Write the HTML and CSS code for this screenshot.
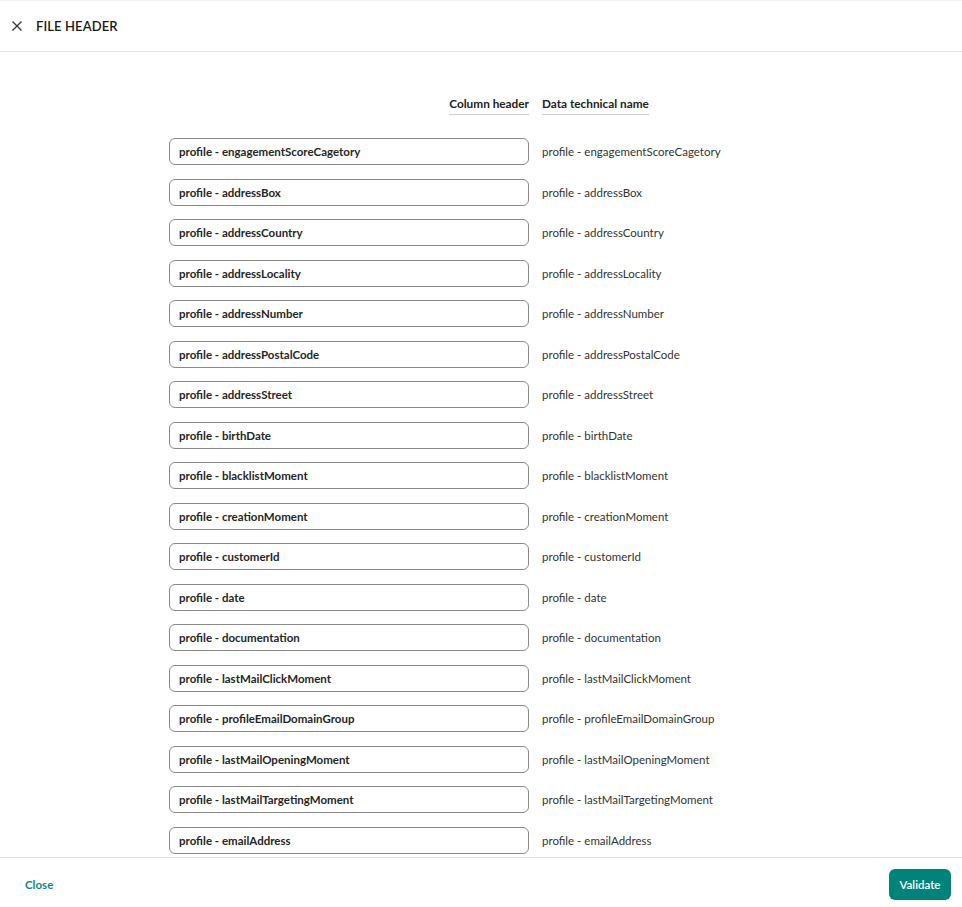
FILE: index.html
```html
<!DOCTYPE html>
<html>
<head>
<meta charset="utf-8">
<link rel="stylesheet" href="styles.css">
</head>
<body>
<div class="modal">
  <header class="top">
    <svg class="x" width="12" height="12" viewBox="0 0 12 12"><path d="M1.5 1.5 L10.5 10.5 M10.5 1.5 L1.5 10.5" stroke="#333" stroke-width="1.3" fill="none"/></svg>
    <h1 class="title">FILE HEADER</h1>
  </header>
  <main class="body">
    <div class="table">
      <div class="head h1"><span>Column header</span></div>
      <div class="head h2"><span>Data technical name</span></div>
      <div class="input">profile - engagementScoreCagetory</div><div class="name">profile - engagementScoreCagetory</div>
      <div class="input">profile - addressBox</div><div class="name">profile - addressBox</div>
      <div class="input">profile - addressCountry</div><div class="name">profile - addressCountry</div>
      <div class="input">profile - addressLocality</div><div class="name">profile - addressLocality</div>
      <div class="input">profile - addressNumber</div><div class="name">profile - addressNumber</div>
      <div class="input">profile - addressPostalCode</div><div class="name">profile - addressPostalCode</div>
      <div class="input">profile - addressStreet</div><div class="name">profile - addressStreet</div>
      <div class="input">profile - birthDate</div><div class="name">profile - birthDate</div>
      <div class="input">profile - blacklistMoment</div><div class="name">profile - blacklistMoment</div>
      <div class="input">profile - creationMoment</div><div class="name">profile - creationMoment</div>
      <div class="input">profile - customerId</div><div class="name">profile - customerId</div>
      <div class="input">profile - date</div><div class="name">profile - date</div>
      <div class="input">profile - documentation</div><div class="name">profile - documentation</div>
      <div class="input">profile - lastMailClickMoment</div><div class="name">profile - lastMailClickMoment</div>
      <div class="input">profile - profileEmailDomainGroup</div><div class="name">profile - profileEmailDomainGroup</div>
      <div class="input">profile - lastMailOpeningMoment</div><div class="name">profile - lastMailOpeningMoment</div>
      <div class="input">profile - lastMailTargetingMoment</div><div class="name">profile - lastMailTargetingMoment</div>
      <div class="input">profile - emailAddress</div><div class="name">profile - emailAddress</div>
    </div>
  </main>
  <footer class="foot">
    <button class="close">Close</button>
    <button class="validate">Validate</button>
  </footer>
</div>
</body>
</html>
```
FILE: styles.css
```css
html, body {
  margin: 0;
  padding: 0;
  background: #fff;
}
body {
  font-family: Lato, "Noto Sans", sans-serif;
  color: #222;
}
.modal {
  height: 907px;
  display: flex;
  flex-direction: column;
  border-top: 1px solid #f0f0f0;
  box-sizing: border-box;
}
.top {
  height: 50px;
  flex: none;
  display: flex;
  align-items: center;
  padding-left: 11px;
  gap: 13px;
  border-bottom: 1px solid #e2e2e2;
}
.x { display: block; }
.title {
  margin: 0;
  font-size: 13px;
  font-weight: 600;
  color: #1a1a1a;
  letter-spacing: 0.1px;
}
.body {
  flex: 1;
  overflow: hidden;
}
.table {
  width: 624px;
  margin: 0 auto;
  padding-top: 44px;
  display: grid;
  grid-template-columns: 360px 251px;
  column-gap: 13px;
  align-items: center;
}
.head {
  font-size: 11.8px;
  font-weight: 700;
  color: #222;
  margin-bottom: 23px;
}
.head span {
  display: inline-block;
  padding-bottom: 3px;
  border-bottom: 1px solid #cfcfcf;
}
.h1 { text-align: right; }
.input {
  height: 27px;
  box-sizing: border-box;
  border: 1px solid #8a8a8a;
  border-radius: 6px;
  padding: 0 9px;
  display: flex;
  align-items: center;
  font-size: 11.5px;
  font-weight: 700;
  color: #262626;
  margin-bottom: 13.5px;
}
.name {
  font-size: 11.5px;
  color: #333;
  margin-bottom: 13.5px;
}
.foot {
  height: 50px;
  box-sizing: border-box;
  flex: none;
  border-top: 1px solid #e2e2e2;
  display: flex;
  align-items: center;
  justify-content: space-between;
  padding: 3px 11px 0 25px;
}
.close {
  background: none;
  border: none;
  padding: 0;
  font-family: inherit;
  font-size: 11.5px;
  font-weight: 700;
  color: #0b8a80;
  cursor: pointer;
}
.validate {
  background: #00847a;
  color: #fff;
  border: none;
  border-radius: 6px;
  height: 31px;
  width: 62px;
  font-family: inherit;
  font-size: 11.5px;
  font-weight: 600;
  cursor: pointer;
}
```
